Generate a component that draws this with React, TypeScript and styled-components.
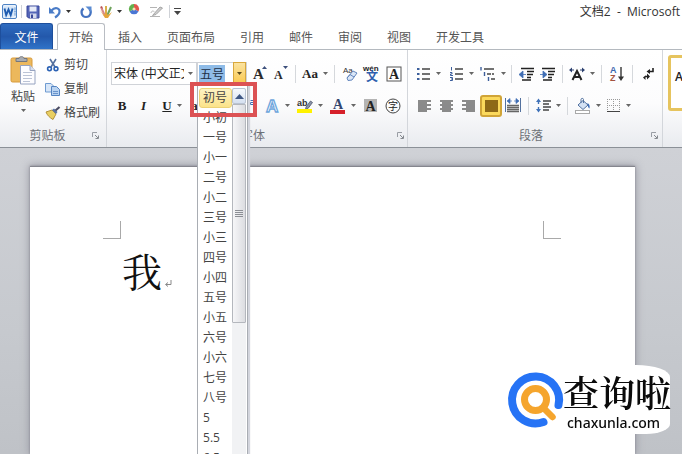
import React, { useState } from "react";
import styled, { createGlobalStyle, css } from "styled-components";

const UI_FONT = `"Open Sans", "Noto Sans CJK SC", sans-serif`;

const GlobalStyle = createGlobalStyle`
  * { box-sizing: border-box; }
  html, body, #root { height: 100%; }
  body { margin: 0; overflow: hidden; font-family: ${UI_FONT}; font-size: 12px; color: #444; }
  button, input, select { font: inherit; color: inherit; }
  button { border: 0; background: none; padding: 0; cursor: pointer; }
`;

const Window = styled.div`
  height: 100vh;
  display: flex;
  flex-direction: column;
  overflow: hidden;
  background: #fff;
`;

/* ---------- title bar ---------- */

const TitleBar = styled.header`
  height: 23px;
  flex: none;
  display: flex;
  align-items: center;
  justify-content: space-between;
  padding: 0 2px;
`;

const QuickAccess = styled.div`
  display: flex;
  align-items: center;
`;

const QuickButton = styled.button<{ $w: number }>`
  width: ${(p) => p.$w}px;
  height: 20px;
  display: flex;
  align-items: center;
  gap: 4px;
`;

const Divider = styled.span`
  width: 1px;
  height: 13px;
  margin: 0 4px;
  background: #cfd2d7;
`;

const Title = styled.h1`
  margin: 0;
  font-size: 12px;
  font-weight: 400;
  line-height: 22px;
  color: #333;
  white-space: pre;
`;

/* ---------- tabs ---------- */

const TabBar = styled.nav`
  height: 27px;
  flex: none;
  display: flex;
  gap: 1px;
  border-bottom: 1px solid #b4b9bf;
`;

const FileTab = styled.button`
  width: 53px;
  height: 26px;
  margin-right: 3px;
  border-radius: 3px 3px 0 0;
  border: 1px solid #1e4f9c;
  border-bottom: 0;
  background: linear-gradient(#2f6cc0, #2358ab 50%, #2f73c8);
  color: #fff;
`;

const Tab = styled.button<{ $active?: boolean }>`
  height: 27px;
  padding: 0 12px;
  color: #555;
  ${(p) =>
    p.$active &&
    css`
      padding: 0 11px;
      border: 1px solid #b9bdc3;
      border-bottom: 0;
      border-radius: 3px 3px 0 0;
      background: #fff;
    `}
`;

/* ---------- ribbon ---------- */

const Ribbon = styled.section`
  position: relative;
  z-index: 1;
  flex: none;
  display: flex;
  background: linear-gradient(#fff 0, #fcfcfd 55%, #e9ebef 100%);
  border-bottom: 1px solid #8b9097;
`;

const Group = styled.div<{ $pad: string; $grow?: boolean }>`
  flex: ${(p) => (p.$grow ? "1 1 0" : "none")};
  min-width: 0;
  display: flex;
  flex-direction: column;
  justify-content: space-between;
  padding: ${(p) => p.$pad};
  overflow: ${(p) => (p.$grow ? "hidden" : "visible")};
  & + & { border-left: 1px solid #d3d6db; }
`;

const GroupFooter = styled.div`
  height: 21px;
  display: flex;
  align-items: center;
  color: #6d7177;
`;

const GroupLabel = styled.span`
  flex: 1;
  text-align: center;
  line-height: 20px;
`;

const Launcher = styled.button`
  width: 10px;
  height: 14px;
  display: grid;
  place-items: center;
`;

const ClipboardBody = styled.div`
  display: flex;
  align-items: flex-start;
  gap: 4px;
`;

const PasteButton = styled.button`
  width: 36px;
  padding-top: 3px;
  display: flex;
  flex-direction: column;
  align-items: center;
  line-height: 24px;
`;

const ClipboardList = styled.div`
  display: flex;
  flex-direction: column;
  padding-top: 1px;
`;

const ClipboardItem = styled.button`
  height: 24px;
  display: flex;
  align-items: center;
  gap: 3px;
  line-height: 20px;
`;

const ToolRows = styled.div`
  display: flex;
  flex-direction: column;
  gap: 9px;
`;

const ToolRow = styled.div`
  height: 23px;
  display: flex;
  align-items: center;
`;

const Tool = styled.button<{ $w: number; $active?: boolean }>`
  width: ${(p) => p.$w}px;
  height: 22px;
  display: flex;
  align-items: center;
  justify-content: center;
  gap: 5px;
  ${(p) =>
    p.$active &&
    css`
      border: 2px solid #d0a437;
      border-radius: 3px;
      background: #fbd95c;
    `}
`;

const ToolDivider = styled.span`
  width: 9px;
  height: 18px;
  background: linear-gradient(#d5d8dc, #d5d8dc) center / 1px 100% no-repeat;
`;

const Glyph = styled.span<{ $bold?: boolean; $italic?: boolean; $under?: boolean }>`
  font-family: "Liberation Serif", serif;
  font-size: 13px;
  line-height: 16px;
  color: #222;
  font-weight: ${(p) => (p.$bold ? 700 : 400)};
  font-style: ${(p) => (p.$italic ? "italic" : "normal")};
  text-decoration: ${(p) => (p.$under ? "underline" : "none")};
`;

const FontSelectBox = styled.div`
  position: relative;
  width: 86px;
  height: 23px;
  border: 1px solid #d0d3d8;
  background: #fff;
  display: flex;
  align-items: center;
`;

const FontSelect = styled.select`
  appearance: none;
  flex: 1;
  min-width: 0;
  height: 21px;
  padding: 0 0 0 2px;
  border: 0;
  outline: 0;
  background: transparent;
  color: #222;
  text-overflow: clip;
`;

const SelectArrow = styled.span`
  width: 12px;
  display: grid;
  place-items: center;
  pointer-events: none;
`;

const SizeBox = styled.div`
  position: relative;
  width: 50px;
  height: 23px;
  margin-right: 2px;
  display: flex;
  align-items: center;
  background: #fff;
  border: 1px solid #d0d3d8;
`;

const SizeInput = styled.input`
  width: 26px;
  height: 17px;
  margin-left: 1px;
  padding: 0 1px;
  border: 0;
  outline: 0;
  background: #8fbce8;
  color: #1d2f45;
`;

const SizeToggle = styled.button`
  width: 13px;
  height: 23px;
  flex: none;
  margin-left: auto;
  border: 1px solid #d9a83c;
  background: linear-gradient(#fbe3a0, #fac94f);
  display: grid;
  place-items: center;
`;

const SizeMenu = styled.div`
  position: absolute;
  top: 22px;
  left: -1px;
  width: 51px;
  height: 420px;
  padding: 2px 1px 0 1px;
  display: flex;
  background: #fff;
  border: 1px solid #a9adb3;
  box-shadow: 2px 0 1px #d3d5dd;
`;

const SizeList = styled.ul`
  flex: 1;
  margin: 0;
  padding: 0;
  list-style: none;
  overflow: hidden;
`;

const SizeOption = styled.button<{ $hot: boolean }>`
  display: block;
  width: 100%;
  height: 20px;
  padding: 0 0 0 3px;
  line-height: 18px;
  text-align: left;
  white-space: nowrap;
  border-radius: 3px;
  border: 1px solid ${(p) => (p.$hot ? "#ecd277" : "transparent")};
  background: ${(p) => (p.$hot ? "linear-gradient(#fdf3c4, #fbe38a)" : "none")};
`;

const ScrollTrack = styled.div`
  width: 14px;
  display: flex;
  flex-direction: column;
  background: #f1f2f4;
`;

const ScrollUp = styled.button`
  height: 16px;
  border: 1px solid #b9c3d2;
  border-radius: 2px;
  background: linear-gradient(#f6f9fd, #d5e0f0);
  display: grid;
  place-items: center;
`;

const ScrollThumb = styled.div`
  height: 219px;
  border: 1px solid #b4b7bd;
  border-radius: 1px;
  background: linear-gradient(90deg, #f6f6f8, #dcdde1);
  display: grid;
  place-items: center;
`;

const Callout = styled.div`
  position: absolute;
  top: 19px;
  left: -8px;
  width: 67px;
  height: 35px;
  border: 4px solid #dc5254;
  pointer-events: none;
`;

const StyleCard = styled.button`
  width: 78px;
  height: 56px;
  flex: none;
  border: 3px solid #e6c45e;
  border-radius: 3px;
  background: #fff;
  padding: 0 0 14px 4px;
  text-align: left;
  font-weight: 600;
  color: #222;
`;

/* ---------- document ---------- */

const Workspace = styled.main`
  flex: 1;
  min-height: 0;
  display: flex;
  padding: 18px 47px 0 30px;
  background: linear-gradient(#cfd1d6, #c6c9ce 60%, #bfc2c7);
`;

const Page = styled.article`
  flex: 1;
  background: #fff;
  border-top: 1px solid #85868e;
  box-shadow: 0 0 2px #85868e, 0 0 8px 1px #9b9ca6;
  padding: 54px 74px 0 73px;
`;

const MarginMarks = styled.div`
  display: flex;
  justify-content: space-between;
`;

const Corner = styled.span<{ $side: "left" | "right" }>`
  width: 18px;
  height: 18px;
  border-bottom: 1px solid #a9a9a9;
  ${(p) => (p.$side === "left" ? "border-right" : "border-left")}: 1px solid #a9a9a9;
`;

const Line = styled.p`
  margin: 6px 0 0 19px;
  display: flex;
  align-items: flex-end;
  gap: 2px;
  font-family: "Noto Serif CJK SC", "Noto Sans CJK SC", serif;
  font-weight: 400;
  font-size: 40px;
  line-height: 50px;
  color: #111;
  svg { margin-bottom: 7px; }
`;

const Watermark = styled.aside`
  position: fixed;
  right: 12px;
  bottom: 20px;
  width: 162px;
  height: 69px;
  display: flex;
  align-items: center;
  background: #fff;
  border-radius: 0 34px 24px 0 / 0 12px 10px 0;
`;

const BrandText = styled.div`
  display: flex;
  flex-direction: column;
  align-items: flex-start;
  color: #0b0b0b;
  white-space: nowrap;
`;

const BrandName = styled.strong`
  font-family: "Noto Serif CJK SC", "Noto Sans CJK SC", serif;
  font-size: 36px;
  font-weight: 600;
  line-height: 46px;
`;

const BrandLink = styled.a`
  margin-left: 4px;
  font-family: "Noto Sans", sans-serif;
  font-size: 14px;
  font-weight: 500;
  line-height: 16px;
  color: inherit;
  text-decoration: none;
`;

/* ---------- drawings ---------- */

type IconProps = { w?: number; h?: number; children: React.ReactNode };
const Icon = ({ w = 14, h = 14, children }: IconProps) => (
  <svg width={w} height={h} viewBox={`0 0 ${w} ${h}`} fill="none" overflow="visible" aria-hidden="true">
    {children}
  </svg>
);

const Caret = ({ color = "#666" }: { color?: string }) => (
  <Icon w={5} h={3}>
    <path d="M0 0h5L2.500 3z" fill={color} />
  </Icon>
);

const serif = "Liberation Serif, serif";

const WordIcon = () => (
  <Icon w={15} h={15}>
    <rect x=".5" y=".5" width="14" height="14" rx="1.500" fill="#e8f1fb" stroke="#4e83c4" />
    <path d="M13 3v9M12 5h2M12 7.500h2M12 10h2" stroke="#8db2de" />
    <rect x="1.500" y="2.500" width="10" height="10" fill="#d2e4f7" />
    <path d="M2.500 4.500l1.700 6.500 2.300-5.500 2.200 5.500 1.900-6.500" stroke="#1f5cb0" strokeWidth="1.900" />
  </Icon>
);
const SaveIcon = () => (
  <Icon w={14}>
    <path d="M1 1h12v12H2.500L1 11.500z" fill="#5566b8" stroke="#38479a" />
    <rect x="3.500" y="1.500" width="7" height="5" fill="#e7ebf7" />
    <rect x="4" y="8.500" width="6.500" height="4.500" fill="#d4d9ec" />
    <rect x="5" y="9.500" width="2" height="3.500" fill="#38479a" />
  </Icon>
);
const UndoIcon = () => (
  <Icon>
    <path d="M3.500 5.500C7 1.500 12 3 11.500 7c-.2 2.500-2 4-4.500 5.500" stroke="#4a7cc7" strokeWidth="2.200" />
    <path d="M1 2v6.500h6z" fill="#4a7cc7" />
  </Icon>
);
const RedoIcon = () => (
  <Icon>
    <path d="M4.500 3.500C1 6 2.500 12 7 12c4.500 0 6-5 3.500-8" stroke="#4472c0" strokeWidth="2.200" />
    <path d="M6.500 1.500h6v6z" fill="#5a8bd2" />
  </Icon>
);
const BrushesIcon = () => (
  <Icon w={14}>
    <path d="M2 2l4 9" stroke="#d98a8a" strokeWidth="2" />
    <path d="M7 1v10" stroke="#d8b04a" strokeWidth="2" />
    <path d="M12 2L8 11" stroke="#6fa35c" strokeWidth="2" />
    <path d="M1 5l5 8h3l4-6-4 3-2-3-2 3z" fill="#e4a53d" />
    <path d="M1 2l2-1 1 3" fill="#b85050" />
  </Icon>
);
const ColorWheel = () => (
  <Icon w={12} h={17}>
    <path d="M6 6V1a5 5 0 0 1 4.500 7.500z" fill="#e0564b" />
    <path d="M6 6l4.500 2.500A5 5 0 0 1 1.500 8.500z" fill="#4a76d4" />
    <path d="M6 6L1.500 8.500A5 5 0 0 1 6 1z" fill="#62b04d" />
    <circle cx="6" cy="6" r="1.500" fill="#f3e3b0" />
  </Icon>
);
const PenIcon = () => (
  <Icon w={15}>
    <path d="M1 2.500h7M1 11.500h10" stroke="#b4b4b4" />
    <path d="M3.500 10.500L11 2l2.500 1L7 9.500z" fill="#cdcdcd" stroke="#a5a5a5" />
    <path d="M2 8c0-2 3-3 3-1" stroke="#bdbdbd" />
  </Icon>
);
const MoreIcon = () => (
  <Icon w={7} h={7}>
    <path d="M0 .5h7" stroke="#444" />
    <path d="M0 3h7L3.500 7z" fill="#444" />
  </Icon>
);
const PasteIcon = () => (
  <Icon w={26} h={30}>
    <rect x="1" y="3" width="21" height="24" rx="1.500" fill="#ecb85c" stroke="#d79a3b" />
    <path d="M6 6.500V3.500h3C9 1 14 1 14 3.500h3v3z" fill="#a9acb2" stroke="#74777d" />
    <path d="M10.500 10.500h9.500l5 5v13.500H10.500z" fill="#fdfdff" stroke="#96a3c0" />
    <path d="M20 10.500v5h5" fill="#d7deee" stroke="#96a3c0" />
    <path d="M13 17.500h9M13 20.500h9M13 23.500h9M13 26.500h7" stroke="#bcc4d6" />
  </Icon>
);
const ScissorsIcon = () => (
  <Icon w={16}>
    <path d="M5 1l5 8M11 1L6 9" stroke="#54709f" strokeWidth="1.600" />
    <circle cx="4.500" cy="10.800" r="1.900" stroke="#2c62b4" strokeWidth="1.600" />
    <circle cx="11" cy="10.800" r="1.900" stroke="#2c62b4" strokeWidth="1.600" />
  </Icon>
);
const CopyIcon = () => (
  <Icon w={16}>
    <path d="M.5 1.500h5.500l2.500 2.500v6H.5z" fill="#d7e6f8" stroke="#6f9bd1" />
    <path d="M6.500 4.500h5l3 3v6h-8z" fill="#b9d3f1" stroke="#5584c2" />
    <path d="M8 9.500h5M8 11.500h5" stroke="#6a94cc" />
  </Icon>
);
const PainterIcon = () => (
  <Icon w={16}>
    <path d="M1 6l6-2 4 4-3 5.500C5 12 2 9 1 6z" fill="#e9cf62" stroke="#b4923c" />
    <path d="M7 4l2-1.500L12.500 6 11 8z" fill="#5b74a5" />
    <path d="M10.500 4.500L14.500 1" stroke="#4c4c63" strokeWidth="2.200" />
  </Icon>
);
const LauncherIcon = () => (
  <Icon w={7} h={7}>
    <path d="M.5 5V.5H5" stroke="#999da4" />
    <path d="M3 3l3 3M6.500 3.500v3h-3" stroke="#85898f" />
  </Icon>
);
const LetterIcon = ({ size, up }: { size: number; up?: boolean }) => (
  <Icon w={16} h={16}>
    <text x="1" y="13" fontFamily={serif} fontSize={size} fontWeight="700" fill="#2b2b2b">A</text>
    <path d={up ? "M10 3h5l-2.500-3z" : "M10 0h5l-2.500 3z"} fill="#3c4f7b" />
  </Icon>
);
const ClearIcon = () => (
  <Icon w={16} h={16}>
    <text x="1" y="7" fontFamily="Liberation Sans" fontSize="8" fill="#333">Aa</text>
    <path d="M5 12l6-7 4 2-5 7-4 .5z" fill="#dbe7f7" stroke="#6285bd" />
    <path d="M5 12l3-3.500 4 2.500" stroke="#6285bd" />
  </Icon>
);
const PhoneticIcon = () => (
  <Icon w={18} h={18}>
    <text x="0" y="6" fontFamily="Liberation Sans" fontWeight="700" fontSize="8" fill="#222">wén</text>
    <text x="3" y="16" fontFamily="Noto Sans CJK SC" fontWeight="700" fontSize="12" fill="#2f5fae">文</text>
  </Icon>
);
const BoxedA = () => (
  <Icon w={16} h={16}>
    <rect x="1" y="1" width="14" height="14" fill="#fff" stroke="#555" />
    <text x="3" y="13" fontFamily={serif} fontWeight="700" fontSize="14" fill="#222">A</text>
  </Icon>
);
const ScriptIcon = ({ up }: { up?: boolean }) => (
  <Icon w={14}>
    <path d="M1 5l6 7M7 5l-6 7" stroke="#333" strokeWidth="1.400" />
    <path d={up ? "M9.500 1.500h3v2h-3v2h3" : "M9.500 9.500h3v2h-3v2h3"} stroke="#3f6db4" />
  </Icon>
);
const EffectsIcon = () => (
  <Icon w={15} h={16}>
    <text x="1" y="14" fontFamily="Liberation Sans" fontWeight="700" fontSize="17" fill="#fff" stroke="#6ea6dc" strokeWidth="1.300">A</text>
  </Icon>
);
const HighlightIcon = () => (
  <Icon w={16} h={16}>
    <text x="0" y="8" fontFamily="Liberation Sans" fontWeight="700" fontSize="9" fill="#333">ab</text>
    <path d="M9 9l4.500-6 2 1.500-4.500 6-2.500 1z" fill="#8a93a8" stroke="#4d566c" strokeWidth=".8" />
    <rect x="0" y="11" width="15" height="4" fill="#fff200" />
  </Icon>
);
const FontColorIcon = () => (
  <Icon w={16} h={16}>
    <text x="3" y="11" fontFamily={serif} fontWeight="700" fontSize="14" fill="#33466f">A</text>
    <rect x="0" y="12" width="15" height="4" fill="#d6202a" />
  </Icon>
);
const ShadedA = () => (
  <Icon w={14} h={14}>
    <rect width="13" height="13" fill="#b4b4b4" />
    <text x="1.500" y="12" fontFamily={serif} fontWeight="700" fontSize="14" fill="#222">A</text>
  </Icon>
);
const EnclosedIcon = () => (
  <Icon w={16} h={16}>
    <circle cx="8" cy="8" r="7" stroke="#444" />
    <text x="3" y="12" fontFamily="Noto Sans CJK SC" fontSize="10" fill="#222">字</text>
  </Icon>
);
const BulletsIcon = () => (
  <Icon>
    <path d="M0 2h2.500M0 7h2.500M0 12h2.500" stroke="#3c5f9c" strokeWidth="2" />
    <path d="M5 2h8M5 7h8M5 12h8" stroke="#444" strokeWidth="1.400" />
  </Icon>
);
const NumbersIcon = () => (
  <Icon>
    <path d="M1.500 0v3.500M0 5.500h2v1.500H.5v1.500H3M0 10.500h2.500v3H0M1 12h1.500" stroke="#3c5f9c" />
    <path d="M5 2h8M5 7h8M5 12h8" stroke="#444" strokeWidth="1.400" />
  </Icon>
);
const MultilevelIcon = () => (
  <Icon w={16}>
    <path d="M1 0v3.500M4.500 5v4M8.500 10v4" stroke="#3c5f9c" strokeWidth="1.400" />
    <path d="M4 2h10M7 7h4M12 7h2M11 12h4" stroke="#444" strokeWidth="1.400" />
  </Icon>
);
const IndentIcon = ({ out }: { out?: boolean }) => (
  <Icon w={16}>
    <path d="M2 1.500h13M8 4.500h7M8 7.500h6M8 10.500h4M3 13h9" stroke="#222" strokeWidth="1.600" />
    <path d={out ? "M0 7.500l4-3.500v7zM4 7.500h3" : "M7 7.500l-4-3.500v7zM0 7.500h3"} fill="#3f6db4" stroke="#3f6db4" strokeWidth=".8" />
  </Icon>
);
const ScaleIcon = () => (
  <Icon w={16}>
    <path d="M3.500 13L8 4l4.500 9M5.500 10h5" stroke="#222" strokeWidth="2" />
    <path d="M0 3l3-2.500v5zM16 3l-3-2.500v5z" fill="#2d4170" />
    <path d="M2 3h3M11 3h3" stroke="#2d4170" />
  </Icon>
);
const SortIcon = () => (
  <Icon w={15} h={16}>
    <text x="0" y="7" fontFamily="Liberation Sans" fontSize="9" fontWeight="700" fill="#3d69ae">A</text>
    <text x="0" y="15" fontFamily="Liberation Sans" fontSize="9" fontWeight="700" fill="#a35340">Z</text>
    <path d="M11 1v11" stroke="#333" strokeWidth="1.400" />
    <path d="M8 10.500h6l-3 4.500z" fill="#333" />
  </Icon>
);
const MarksIcon = () => (
  <Icon w={13}>
    <path d="M11 1v3.500H6.500M7 9.500H3" stroke="#222" strokeWidth="1.600" />
    <path d="M4.500 4.500L8 2v5zM5 6.500L8 9.500 5 12.500zM3.500 13L1 10.500l2.500-2z" fill="#222" />
  </Icon>
);
const AlignIcon = ({ kind }: { kind: "left" | "center" | "right" | "full" }) => {
  const short = { left: "0", center: "2", right: "4", full: "0" }[kind];
  const len = kind === "full" ? 13 : 9;
  const color = kind === "full" ? "#7d5a11" : "#666";
  return (
    <Icon w={13} h={12}>
      <path d="M0 1h13M0 5h13M0 9h13" stroke={color} strokeWidth="1.600" />
      <path d={`M${short} 3h${len}M${short} 7h${len}M${short} 11h${len}`} stroke={color} strokeWidth="1.600" />
      {kind === "full" && <rect width="13" height="12" fill="#8a6414" opacity=".75" />}
    </Icon>
  );
};
const DistributeIcon = () => (
  <Icon w={16} h={15}>
    <path d="M.5 0v14M15.500 0v14" stroke="#53719f" />
    <path d="M2 3l3-2.500v5zM14 3l-3-2.500v5zM4 3h3M9 3h3" fill="#3f6db4" stroke="#3f6db4" strokeWidth=".7" />
    <path d="M2 7.500h12M2 9.500h12M2 11.500h12M2 13.500h12" stroke="#666" strokeWidth="1.500" />
  </Icon>
);
const LineSpacingIcon = () => (
  <Icon w={15} h={15}>
    <path d="M0 4L2.500.5 5 4zM0 11l2.500 3.500L5 11z" fill="#4072b8" />
    <path d="M2.500 3v3M2.500 9v3" stroke="#4072b8" strokeWidth="1.400" />
    <path d="M7 3h8M7 6h6M7 9h8M7 12h6" stroke="#444" strokeWidth="1.300" />
  </Icon>
);
const FillIcon = () => (
  <Icon w={16} h={16}>
    <path d="M3 7l5-4.500 5 4.500-5 4.500z" fill="#d3e1f4" stroke="#51719f" />
    <path d="M6 5V1.500c0-1.500 2.500-1.500 2.500 0V5" stroke="#51719f" />
    <path d="M12 5c2.500.5 3 3 2.500 5.500-1-.5-2-2-1.500-4z" fill="#3869b6" />
    <rect x=".5" y="12.500" width="14" height="3" fill="#fff" stroke="#a9a9a9" />
  </Icon>
);
const BordersIcon = () => (
  <Icon w={14}>
    <path d="M.5 0v12M6.500 0v12M12.500 0v12M0 .5h13M0 6.500h13" stroke="#999" strokeDasharray="1 1" />
    <path d="M0 12.500h13" stroke="#444" />
  </Icon>
);
const ReturnMark = () => (
  <Icon w={8} h={8}>
    <path d="M7 0v4.500H2M4 2.500l-2.500 2L4 6.500" stroke="#888" />
  </Icon>
);
const BrandIcon = () => (
  <Icon w={55} h={56}>
    <path d="M35.500 50A23.500 23.500 0 1 1 50.500 33" stroke="#2673f5" strokeWidth="8" strokeLinecap="round" />
    <circle cx="27.500" cy="27.500" r="11" stroke="#f5a52d" strokeWidth="7" />
    <path d="M36 36.500l8.500 8.500" stroke="#f5a52d" strokeWidth="6.500" strokeLinecap="round" />
  </Icon>
);

/* ---------- data ---------- */

const tabs = ["开始", "插入", "页面布局", "引用", "邮件", "审阅", "视图", "开发工具"];
const sizes = [
  "初号", "小初", "一号", "小一", "二号", "小二", "三号", "小三", "四号", "小四",
  "五号", "小五", "六号", "小六", "七号", "八号", "5", "5.5", "6.5",
];

const Footer = ({ label }: { label: string }) => (
  <GroupFooter>
    <GroupLabel>{label}</GroupLabel>
    <Launcher aria-label={`${label}设置`}>
      <LauncherIcon />
    </Launcher>
  </GroupFooter>
);

type ToolButtonProps = { label: string; w: number; menu?: boolean; active?: boolean; children: React.ReactNode };
const ToolButton = ({ label, w, menu, active, children }: ToolButtonProps) => (
  <Tool $w={w} $active={active} aria-label={label}>
    {children}
    {menu && <Caret />}
  </Tool>
);

function SizePicker() {
  const [hot, setHot] = useState("初号");
  return (
    <SizeBox>
      <SizeInput aria-label="字号" role="combobox" aria-expanded="true" aria-controls="size-list" defaultValue="五号" />
      <SizeToggle aria-label="展开字号">
        <Caret color="#5b4a1e" />
      </SizeToggle>
      <SizeMenu>
        <SizeList id="size-list" role="listbox" aria-label="字号列表">
          {sizes.map((s) => (
            <li key={s} role="presentation">
              <SizeOption role="option" aria-selected={s === hot} $hot={s === hot} onMouseEnter={() => setHot(s)}>
                {s}
              </SizeOption>
            </li>
          ))}
        </SizeList>
        <ScrollTrack>
          <ScrollUp aria-label="向上滚动">
            <Icon w={9} h={5}>
              <path d="M0 5L4.500 0 9 5z" fill="#3e5784" />
            </Icon>
          </ScrollUp>
          <ScrollThumb>
            <Icon w={8} h={8}>
              <path d="M0 .5h8M0 2.500h8M0 4.500h8M0 6.500h8" stroke="#8c8f95" />
            </Icon>
          </ScrollThumb>
        </ScrollTrack>
      </SizeMenu>
      <Callout />
    </SizeBox>
  );
}

export default function App() {
  return (
    <Window>
      <GlobalStyle />
      <TitleBar>
        <QuickAccess>
          <QuickButton $w={15} aria-label="Word"><WordIcon /></QuickButton>
          <Divider />
          <QuickButton $w={22} aria-label="保存"><SaveIcon /></QuickButton>
          <QuickButton $w={31} aria-label="撤消"><UndoIcon /><Caret color="#333" /></QuickButton>
          <QuickButton $w={20} aria-label="恢复"><RedoIcon /></QuickButton>
          <QuickButton $w={29} aria-label="画笔"><BrushesIcon /><Caret color="#333" /></QuickButton>
          <QuickButton $w={21} aria-label="颜色"><ColorWheel /></QuickButton>
          <QuickButton $w={16} aria-label="墨迹"><PenIcon /></QuickButton>
          <Divider />
          <QuickButton $w={8} aria-label="自定义快速访问工具栏"><MoreIcon /></QuickButton>
        </QuickAccess>
        <Title>文档2  -  Microsoft</Title>
      </TitleBar>

      <TabBar>
        <FileTab>文件</FileTab>
        {tabs.map((t, i) => (
          <Tab key={t} $active={i === 0}>{t}</Tab>
        ))}
      </TabBar>

      <Ribbon>
        <Group $pad="2px 6px 1px 5px">
          <ClipboardBody>
            <PasteButton>
              <PasteIcon />
              粘贴
              <Caret />
            </PasteButton>
            <ClipboardList>
              <ClipboardItem><ScissorsIcon />剪切</ClipboardItem>
              <ClipboardItem><CopyIcon />复制</ClipboardItem>
              <ClipboardItem><PainterIcon />格式刷</ClipboardItem>
            </ClipboardList>
          </ClipboardBody>
          <Footer label="剪贴板" />
        </Group>

        <Group $pad="12px 2px 1px 4px">
          <ToolRows>
            <ToolRow>
              <FontSelectBox>
                <FontSelect aria-label="字体">
                  <option>宋体 (中文正文)</option>
                </FontSelect>
                <SelectArrow><Caret /></SelectArrow>
              </FontSelectBox>
              <SizePicker />
              <ToolButton label="增大字体" w={22}><LetterIcon size={15} up /></ToolButton>
              <ToolButton label="缩小字体" w={20}><LetterIcon size={12} /></ToolButton>
              <ToolDivider />
              <ToolButton label="更改大小写" w={30} menu><Glyph $bold>Aa</Glyph></ToolButton>
              <ToolDivider />
              <ToolButton label="清除格式" w={22}><ClearIcon /></ToolButton>
              <ToolButton label="拼音指南" w={22}><PhoneticIcon /></ToolButton>
              <ToolButton label="字符边框" w={22}><BoxedA /></ToolButton>
            </ToolRow>
            <ToolRow>
              <ToolButton label="加粗" w={22}><Glyph $bold>B</Glyph></ToolButton>
              <ToolButton label="倾斜" w={21}><Glyph $bold $italic>I</Glyph></ToolButton>
              <ToolButton label="下划线" w={36} menu><Glyph $bold $under>U</Glyph></ToolButton>
              <ToolButton label="删除线" w={22}><Glyph $bold>abc</Glyph></ToolButton>
              <ToolButton label="下标" w={22}><ScriptIcon /></ToolButton>
              <ToolButton label="上标" w={28}><ScriptIcon up /></ToolButton>
              <ToolButton label="文本效果" w={31} menu><EffectsIcon /></ToolButton>
              <ToolButton label="突出显示" w={33} menu><HighlightIcon /></ToolButton>
              <ToolButton label="字体颜色" w={33} menu><FontColorIcon /></ToolButton>
              <ToolButton label="字符底纹" w={23}><ShadedA /></ToolButton>
              <ToolButton label="带圈字符" w={22}><EnclosedIcon /></ToolButton>
            </ToolRow>
          </ToolRows>
          <Footer label="字体" />
        </Group>

        <Group $pad="12px 3px 1px 5px">
          <ToolRows>
            <ToolRow>
              <ToolButton label="项目符号" w={32} menu><BulletsIcon /></ToolButton>
              <ToolButton label="编号" w={33} menu><NumbersIcon /></ToolButton>
              <ToolButton label="多级列表" w={29} menu><MultilevelIcon /></ToolButton>
              <ToolDivider />
              <ToolButton label="减少缩进量" w={21}><IndentIcon out /></ToolButton>
              <ToolButton label="增加缩进量" w={21}><IndentIcon /></ToolButton>
              <ToolDivider />
              <ToolButton label="中文版式" w={30} menu><ScaleIcon /></ToolButton>
              <ToolDivider />
              <ToolButton label="排序" w={22}><SortIcon /></ToolButton>
              <ToolDivider />
              <ToolButton label="显示编辑标记" w={22}><MarksIcon /></ToolButton>
            </ToolRow>
            <ToolRow>
              <ToolButton label="文本左对齐" w={22}><AlignIcon kind="left" /></ToolButton>
              <ToolButton label="居中" w={22}><AlignIcon kind="center" /></ToolButton>
              <ToolButton label="文本右对齐" w={23}><AlignIcon kind="right" /></ToolButton>
              <ToolButton label="两端对齐" w={22} active><AlignIcon kind="full" /></ToolButton>
              <ToolButton label="分散对齐" w={22}><DistributeIcon /></ToolButton>
              <ToolDivider />
              <ToolButton label="行距" w={30} menu><LineSpacingIcon /></ToolButton>
              <ToolDivider />
              <ToolButton label="底纹" w={32} menu><FillIcon /></ToolButton>
              <ToolButton label="边框" w={30} menu><BordersIcon /></ToolButton>
            </ToolRow>
          </ToolRows>
          <Footer label="段落" />
        </Group>

        <Group $pad="5px 0 0 5px" $grow>
          <StyleCard>AaBbCcDd</StyleCard>
        </Group>
      </Ribbon>

      <Workspace>
        <Page>
          <MarginMarks>
            <Corner $side="left" />
            <Corner $side="right" />
          </MarginMarks>
          <Line>
            我
            <ReturnMark />
          </Line>
        </Page>
      </Workspace>

      <Watermark>
        <BrandIcon />
        <BrandText>
          <BrandName>查询啦</BrandName>
          <BrandLink href="#chaxunla">chaxunla.com</BrandLink>
        </BrandText>
      </Watermark>
    </Window>
  );
}
